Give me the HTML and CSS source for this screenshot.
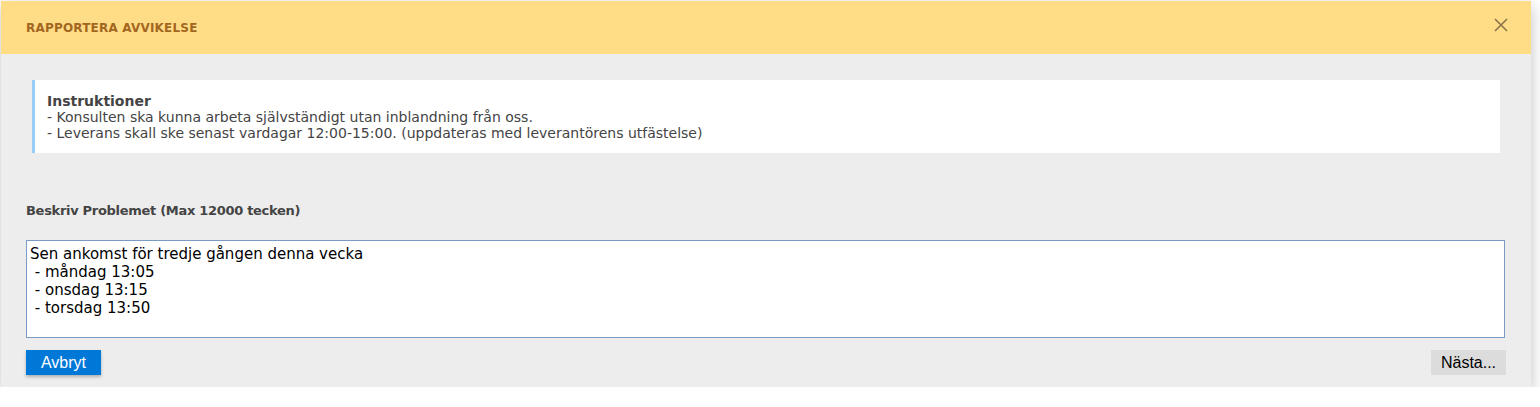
FILE: index.html
```html
<!DOCTYPE html>
<html lang="sv">
<head>
<meta charset="utf-8">
<title>Rapportera avvikelse</title>
<link rel="stylesheet" href="styles.css">
</head>
<body>
<div class="dialog">
  <div class="dialog-header">
    <h1 class="dialog-title">RAPPORTERA AVVIKELSE</h1>
    <button class="close-btn" aria-label="Stäng">
      <svg width="14" height="14" viewBox="0 0 14 14"><path d="M1 1 L13 13 M13 1 L1 13" stroke="#8a7548" stroke-width="1.6" fill="none"/></svg>
    </button>
  </div>
  <div class="dialog-body">
    <div class="instructions">
      <div class="instr-title">Instruktioner</div>
      <div>- Konsulten ska kunna arbeta självständigt utan inblandning från oss.</div>
      <div>- Leverans skall ske senast vardagar 12:00-15:00. (uppdateras med leverantörens utfästelse)</div>
    </div>
    <label class="field-label" for="problem">Beskriv Problemet (Max 12000 tecken)</label>
    <textarea id="problem" class="problem">Sen ankomst för tredje gången denna vecka
 - måndag 13:05
 - onsdag 13:15
 - torsdag 13:50</textarea>
    <div class="actions">
      <button class="btn btn-primary">Avbryt</button>
      <button class="btn btn-secondary">Nästa...</button>
    </div>
  </div>
</div>
</body>
</html>
```
FILE: styles.css
```css
html, body {
  margin: 0;
  padding: 0;
  background: #ffffff;
}
body {
  padding: 1px 0 0 1px;
  font-family: "DejaVu Sans", Verdana, sans-serif;
}
.dialog {
  width: 1530px;
  box-shadow: 0 5px 15px rgba(0,0,0,0.25);
  background: #ededed;
}
.dialog-header {
  height: 53px;
  background: #ffdd87;
  display: flex;
  align-items: center;
  justify-content: space-between;
  padding: 0 23px 0 25px;
  box-sizing: border-box;
}
.dialog-title {
  margin: 0;
  font-family: "DejaVu Sans", sans-serif;
  font-weight: bold;
  font-size: 12px;
  color: #a3661f;
  letter-spacing: 0.2px;
}
.close-btn {
  border: 0;
  background: none;
  padding: 0;
  width: 14px;
  height: 14px;
  display: flex;
  margin-top: -6px;
}
.dialog-body {
  padding: 26px 25px 12px 25px;
  display: flex;
  flex-direction: column;
}
.instructions {
  margin: 0 6px 0 6px;
  background: #ffffff;
  border-left: 3px solid #99ccf7;
  padding: 13px 12px 12px 12px;
  font-size: 14px;
  line-height: 16px;
  color: #444;
}
.instr-title {
  font-weight: bold;
}
.field-label {
  margin-top: 50px;
  font-size: 13px;
  letter-spacing: -0.3px;
  font-weight: bold;
  color: #444;
  line-height: 16px;
}
.problem {
  margin-top: 21px;
  height: 98px;
  box-sizing: border-box;
  border: 1px solid #7a9cc4;
  font-family: "DejaVu Sans", Verdana, sans-serif;
  font-size: 15px;
  line-height: 18px;
  padding: 4px 3px;
  color: #000;
  resize: none;
  margin-right: 1px;
}
.actions {
  margin-top: 12px;
  display: flex;
  justify-content: space-between;
}
.btn {
  width: 75px;
  height: 25px;
  border: 0;
  font-family: "Liberation Sans", Arial, sans-serif;
  font-size: 16px;
  padding: 0;
}
.btn-primary {
  background: #0078d7;
  color: #fff;
  box-shadow: 0 2px 3px rgba(0,0,0,0.25);
}
.btn-secondary {
  background: #dcdcdc;
  color: #000;
}
```
